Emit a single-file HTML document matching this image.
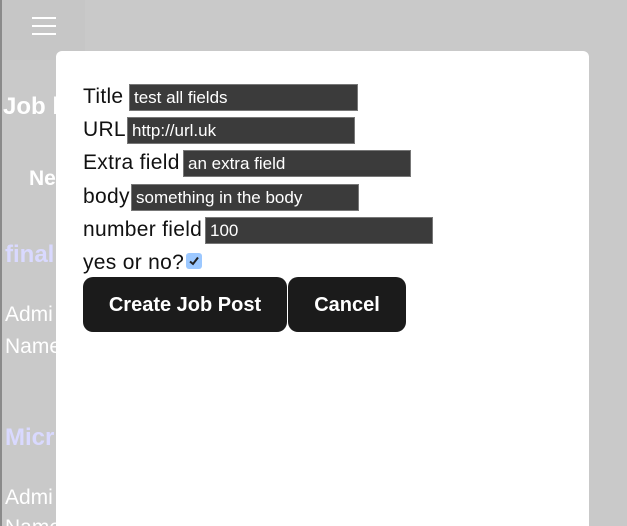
<!DOCTYPE html>
<html style="overflow:hidden;height:526px"><head><style>
body{margin:0;width:627px;height:526px;overflow:hidden;background:#c9c9c9;font-family:"Liberation Sans",sans-serif;position:relative}
.lb{position:absolute;left:0;top:0;width:2px;height:526px;background:#8a8a8a}
.hd{position:absolute;left:2px;top:0;width:83px;height:60px;background:#c6c6c6}
.hb{position:absolute;left:32px;width:24px;height:2px;background:#fff}
.bg{position:absolute;color:#fff;font-size:21px;white-space:nowrap}
.modal{position:absolute;left:56px;top:51px;width:533px;height:475px;background:#fff;border-radius:6px 6px 0 0}
.l{position:absolute;font-size:21px;letter-spacing:0.3px;color:#111;white-space:nowrap}
.i{position:absolute;background:#3b3b3b;border:1px solid #777;box-sizing:border-box;height:27px;color:#fff;font-size:17px;line-height:25px;padding-left:4px;white-space:nowrap}
.btn{position:absolute;top:277px;height:55px;background:#1b1b1b;border-radius:10px;color:#fff;font-weight:bold;font-size:20px;line-height:57px;text-align:center}
</style></head><body>
<div class="lb"></div><div class="hd"></div>
<div class="hb" style="top:17px"></div><div class="hb" style="top:25px"></div><div class="hb" style="top:33px"></div>
<div class="bg" style="left:3px;top:93px;font-weight:bold;font-size:24px">Job l</div>
<div class="bg" style="left:29px;top:167px;font-weight:bold">Ne</div>
<div class="bg" style="left:5px;top:241px;font-weight:bold;font-size:24px;color:#d9d9ff">final</div>
<div class="bg" style="left:5px;top:303px">Admi</div>
<div class="bg" style="left:5px;top:335px">Name</div>
<div class="bg" style="left:5px;top:424px;font-weight:bold;font-size:24px;color:#d9d9ff">Micr</div>
<div class="bg" style="left:5px;top:486px">Admi</div>
<div class="bg" style="left:5px;top:516px">Name</div>
<div class="modal"></div>
<div class="l" style="left:83px;top:85px">Title</div>
<div class="i" style="left:129px;top:84px;width:229px">test all fields</div>
<div class="l" style="left:83px;top:118px">URL</div>
<div class="i" style="left:127px;top:117px;width:228px">http://url.uk</div>
<div class="l" style="left:83px;top:151px">Extra field</div>
<div class="i" style="left:183px;top:150px;width:228px">an extra field</div>
<div class="l" style="left:83px;top:185px">body</div>
<div class="i" style="left:131px;top:184px;width:228px">something in the body</div>
<div class="l" style="left:83px;top:218px">number field</div>
<div class="i" style="left:205px;top:217px;width:228px">100</div>
<div class="l" style="left:83px;top:251px">yes or no?</div>
<div style="position:absolute;left:186px;top:253px;width:16px;height:16px;background:#9cc8ff;border-radius:3px"><svg width="16" height="16"><path d="M4 8.5 L7 11 L12 4.5" stroke="#222" stroke-width="2" fill="none"/></svg></div>
<div class="btn" style="left:83px;width:204px">Create Job Post</div>
<div class="btn" style="left:288px;width:118px">Cancel</div>
</body></html>
